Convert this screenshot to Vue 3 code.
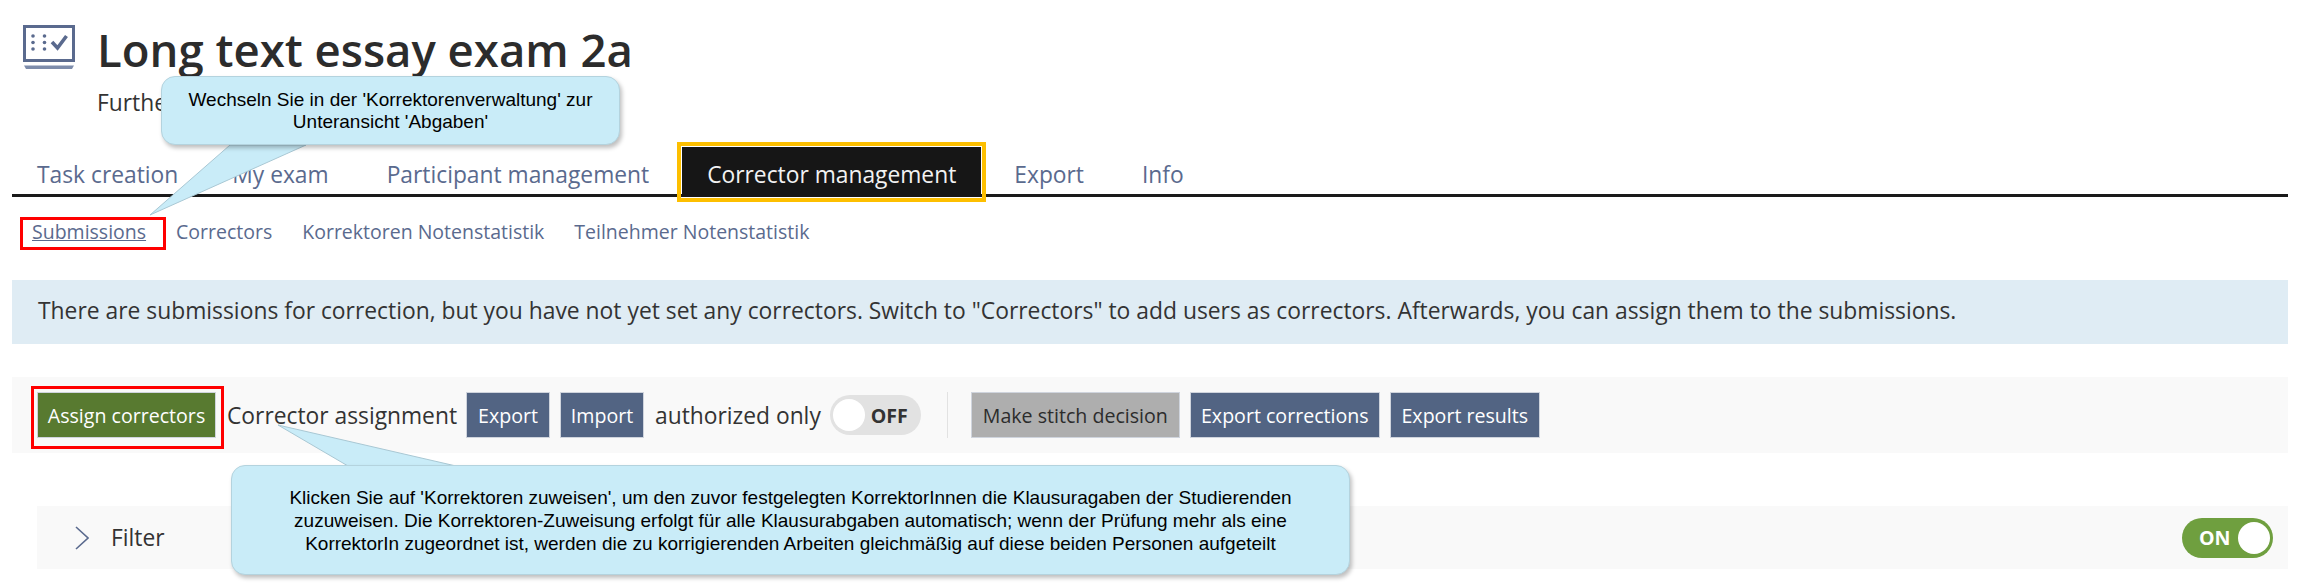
<template>
  <div class="page">
    <header class="head">
      <svg class="head-icon" width="52" height="44" viewBox="0 0 52 44">
        <rect x="1.5" y="1.5" width="49" height="34" fill="none" stroke="#5a6a8e" stroke-width="3" />
        <rect x="0" y="34" width="52" height="2.5" fill="#5a6a8e" />
        <path d="M3 44 L49 44 L51 40.5 L1 40.5 Z" fill="#7d8cab" />
        <g fill="#5a6a8e">
          <circle cx="10" cy="11" r="1.8" />
          <circle cx="10" cy="17.5" r="1.8" />
          <circle cx="10" cy="24" r="1.8" />
          <circle cx="21.5" cy="11" r="1.8" />
          <circle cx="21.5" cy="17.5" r="1.8" />
          <circle cx="21.5" cy="24" r="1.8" />
        </g>
        <path d="M29 17 L34.5 23 L43.5 11" fill="none" stroke="#5a6a8e" stroke-width="3.6" />
      </svg>
      <div>
        <h1 class="title">Long text essay exam 2a</h1>
        <p class="sub">Further information</p>
      </div>
    </header>

    <nav class="tabs">
      <a v-for="t in tabs" :key="t" class="tab" :class="{ active: t === activeTab }">{{ t }}</a>
    </nav>

    <nav class="subtabs">
      <a v-for="(s, i) in subTabs" :key="s" class="subtab" :class="{ current: i === 0 }">{{ s }}</a>
    </nav>

    <div class="notice">
      There are submissions for correction, but you have not yet set any correctors. Switch to "Correctors" to add users as correctors. Afterwards, you can assign them to the submissions.
    </div>

    <div class="toolbar">
      <div class="red-box"><button class="btn green">Assign correctors</button></div>
      <span class="label first">Corrector assignment</span>
      <button class="btn blue w84">Export</button>
      <button class="btn blue w84">Import</button>
      <span class="label">authorized only</span>
      <div class="toggle off"><span class="knob"></span><span class="toggle-text">OFF</span></div>
      <span class="divider"></span>
      <button class="btn grey">Make stitch decision</button>
      <button class="btn blue w190">Export corrections</button>
      <button class="btn blue w150">Export results</button>
    </div>

    <div class="filter">
      <svg class="chevron" width="14" height="24" viewBox="0 0 14 24">
        <path d="M1 1 L13 12 L1 23" fill="none" stroke="#5a6a8e" stroke-width="1.6" />
      </svg>
      <span class="filter-label">Filter</span>
      <div class="toggle on"><span class="toggle-text">ON</span><span class="knob"></span></div>
    </div>

    <svg class="pointers" width="2307" height="584" viewBox="0 0 2307 584">
      <path d="M230 145 L150 215 L306 145 Z" fill="#c9ecf8" stroke="#a9c8d4" stroke-width="1" />
      <path d="M348 466 L278 425 L456 466 Z" fill="#c9ecf8" stroke="#a9c8d4" stroke-width="1" />
    </svg>
    <div class="callout one">
      Wechseln Sie in der 'Korrektorenverwaltung' zur<br />Unteransicht 'Abgaben'
    </div>
    <div class="callout two">
      Klicken Sie auf 'Korrektoren zuweisen', um den zuvor festgelegten KorrektorInnen die Klausuragaben der Studierenden<br />
      zuzuweisen. Die Korrektoren-Zuweisung erfolgt für alle Klausurabgaben automatisch; wenn der Prüfung mehr als eine<br />
      KorrektorIn zugeordnet ist, werden die zu korrigierenden Arbeiten gleichmäßig auf diese beiden Personen aufgeteilt
    </div>
  </div>
</template>

<script setup>
const tabs = ['Task creation', 'My exam', 'Participant management', 'Corrector management', 'Export', 'Info']
const activeTab = 'Corrector management'
const subTabs = ['Submissions', 'Correctors', 'Korrektoren Notenstatistik', 'Teilnehmer Notenstatistik']
</script>

<style>
html, body {
  background: #fff;
  overflow: hidden;
}
</style>

<style scoped>
.page {
  position: relative;
  width: 2307px;
  height: 584px;
  box-sizing: border-box;
  padding: 25px 19px 0 12px;
  font-family: "Open Sans", sans-serif;
  color: #333;
  overflow: hidden;
}

.head {
  display: flex;
  gap: 22px;
  height: 122px;
  padding-left: 11px;
}

.head-icon {
  flex: none;
}

.title {
  margin: 0;
  font-size: 45.5px;
  line-height: 48px;
  font-weight: 600;
  color: #2c2c2c;
}

.sub {
  margin: 17px 0 0;
  font-size: 22.8px;
  line-height: 26px;
  color: #333;
}

.tabs {
  display: flex;
  gap: 8px;
  height: 50px;
  box-sizing: border-box;
  border-bottom: 3px solid #1a1a1a;
}

.tab {
  padding: 0 25px;
  height: 50px;
  line-height: 56px;
  font-size: 22.8px;
  color: #5a6a8e;
  white-space: nowrap;
}

.tab:first-child {
  margin-right: -4px;
}

.tab.active {
  background: #161616;
  color: #f2f2f2;
  outline: 4px solid #fdbf00;
  outline-offset: 1px;
}

.subtabs {
  display: flex;
  gap: 30px;
  margin-top: 23px;
  padding-left: 11px;
  height: 24px;
  align-items: flex-start;
}

.subtab {
  font-size: 19.5px;
  line-height: 24px;
  color: #5a6a8e;
  white-space: nowrap;
}

.subtab.current {
  text-decoration: underline;
  outline: 3px solid #f00;
  padding: 0 17px 3px 9px;
  margin-right: -17px;
}

.notice {
  margin-top: 36px;
  height: 64px;
  line-height: 62px;
  padding-left: 26px;
  font-size: 22.85px;
  background: #dfecf4;
  white-space: nowrap;
}

.toolbar {
  display: flex;
  align-items: center;
  margin-top: 33px;
  height: 76px;
  padding-left: 19px;
  background: #f9f9f9;
}

.red-box {
  display: flex;
  align-self: flex-start;
  margin: 9px 3px 0 0;
  padding: 3px 5px 8px 3px;
  border: 3px solid #f00;
}

.btn {
  height: 46px;
  border: 1px solid #cfd4dd;
  font-family: inherit;
  font-size: 19.6px;
  padding: 0;
  margin-right: 10px;
  color: #fff;
  white-space: nowrap;
}

.btn.blue {
  background: #526483;
}

.w84 {
  width: 84px;
}

.w190 {
  width: 190px;
}

.w150 {
  width: 150px;
}

.btn.green {
  background: #587a30;
  width: 179px;
  margin-right: 0;
}

.btn.grey {
  background: #aeaeae;
  color: #2c2c2c;
  width: 209px;
}

.label {
  font-size: 22.8px;
  margin-right: 9px;
  white-space: nowrap;
}

.w84 + .label {
  margin-left: 1px;
}

.toggle {
  display: flex;
  align-items: center;
  justify-content: space-between;
  width: 91px;
  height: 40px;
  box-sizing: border-box;
  padding: 0 3px;
  border-radius: 20px;
  font-size: 19.6px;
  font-weight: 700;
}

.toggle.off {
  background: #e2e2e2;
  color: #333;
  padding-right: 13px;
}

.toggle.on {
  background: #6f9f3f;
  color: #fff;
  padding-left: 17px;
  margin-left: auto;
}

.knob {
  width: 32px;
  height: 32px;
  border-radius: 50%;
  background: #fff;
}

.divider {
  width: 1px;
  height: 46px;
  margin: 0 23px 0 26px;
  background: #e2e2e2;
}

.filter {
  display: flex;
  align-items: center;
  margin: 53px 0 0 25px;
  height: 63px;
  padding: 0 15px 0 38px;
  background: #f9f9f9;
}

.chevron {
  flex: none;
}

.filter-label {
  margin-left: 22px;
  font-size: 22.8px;
  color: #333;
}

.pointers {
  position: absolute;
  left: 0;
  top: 0;
  pointer-events: none;
}

.callout {
  position: absolute;
  box-sizing: border-box;
  display: flex;
  align-items: center;
  justify-content: center;
  text-align: center;
  background: #c9ecf8;
  border: 1px solid #b4d3de;
  border-radius: 14px;
  box-shadow: 2px 3px 4px rgba(0, 0, 0, 0.25);
  font-family: "Liberation Sans", Arial, sans-serif;
  font-size: 19px;
  line-height: 23px;
  color: #000;
}

.callout.one {
  left: 161px;
  top: 76px;
  width: 459px;
  height: 69px;
  line-height: 22px;
}

.callout.two {
  left: 231px;
  top: 465px;
  width: 1119px;
  height: 110px;
}
</style>
